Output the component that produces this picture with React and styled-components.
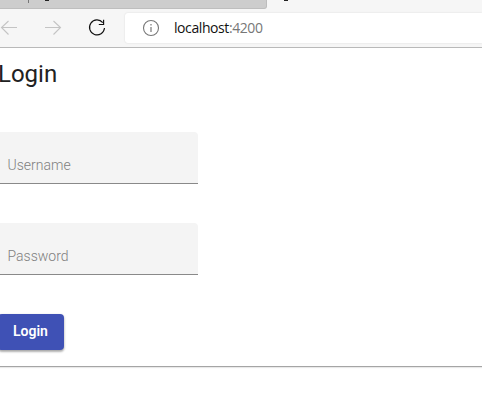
import React from "react";
import styled, { createGlobalStyle } from "styled-components";

const GlobalStyle = createGlobalStyle`
  * { box-sizing: border-box; }
  body { margin: 0; background: #fff; overflow: hidden; font-family: Roboto, sans-serif; }
`;

const Window = styled.main`
  width: 482px;
  height: 419px;
  overflow: hidden;
  background: #fff;
`;

const TabStrip = styled.header`
  display: flex;
  height: 9px;
  background: #f6f6f6;
`;

const InactiveTab = styled.div`
  width: 267px;
  height: 9px;
  background: #cdcdcd;
  border-right: 1px solid #bdbdbd;
  border-bottom: 1px solid #bebebe;
  border-bottom-right-radius: 3px;
`;

const ActiveTab = styled.div`
  flex: 1;
`;

const TabMarks = styled.svg`
  display: block;
`;

const Toolbar = styled.nav`
  display: flex;
  align-items: flex-start;
  height: 39px;
  padding-top: 4px;
  background: #f6f6f6;
  border-bottom: 1px solid #b9b9b9;
`;

const NavButtons = styled.div`
  display: flex;
  width: 125px;
  height: 30px;
`;

const AddressBar = styled.div`
  display: flex;
  flex: 1;
  align-items: center;
  height: 30px;
  padding-left: 17px;
  background: #fff;
  border-radius: 3px 0 0 3px;
  box-shadow: 0 0 2px rgba(0, 0, 0, 0.13);
`;

const Address = styled.span`
  margin-left: 14px;
  font: 14px/20px "Open Sans", sans-serif;
  letter-spacing: -0.42px;
  color: #111;
  white-space: nowrap;
`;

const Port = styled.span`
  color: #777;
`;

const LoginCard = styled.form`
  display: flex;
  flex-direction: column;
  align-items: flex-start;
  height: 319px;
  border-bottom: 1px solid #a5a5a5;
  box-shadow: 0 1px 1px #e9e9e9;
`;

const Title = styled.h1`
  height: 32px;
  margin: 10px 0 42px -2px;
  font-size: 24px;
  font-weight: 450;
  line-height: 32px;
  letter-spacing: 0;
  color: #212121;
`;

const Field = styled.label`
  width: 198px;
  height: 52px;
  margin-bottom: 39px;
  padding: 23px 8px 0 7.5px;
  background: #f4f4f4;
  border-bottom: 1px solid #898989;
  border-top-right-radius: 4px;
  font-size: 14px;
  font-weight: 300;
  line-height: 20px;
  color: #808080;
`;

const SubmitButton = styled.button`
  width: 66px;
  height: 36px;
  margin: 0 0 0 -2px;
  padding: 0 0 2px 15px;
  border: 0;
  border-radius: 4px;
  background: #3f51b5;
  box-shadow: 0 2px 2px rgba(0, 0, 0, 0.22), 0 1px 3px rgba(0, 0, 0, 0.2);
  color: #fff;
  font: 600 14px/34px Roboto, sans-serif;
  text-align: left;
`;

export default function App() {
  return (
    <>
      <GlobalStyle />
      <Window>
        <TabStrip>
          <InactiveTab>
            <TabMarks width="70" height="8">
              <path d="M28.5 0v3" stroke="#777" />
              <path d="M45 0h4" stroke="#222" strokeWidth="2" />
            </TabMarks>
          </InactiveTab>
          <ActiveTab>
            <TabMarks width="40" height="8">
              <path d="M17 0h4" stroke="#222" strokeWidth="2" />
            </TabMarks>
          </ActiveTab>
        </TabStrip>
        <Toolbar>
          <NavButtons>
            <svg width="125" height="30" fill="none">
              <g stroke="#c4c4c4" strokeWidth="1.1">
                <path d="M17 14.5H2M8.5 8L1.5 14.5L8.5 21.5" />
                <path d="M45 14.5h15M53.5 8l7 6.5-7 7" />
              </g>
              <path d="M102.8 9.6A7.5 7.5 0 1 0 104.5 15M103.6 6.8v4.7h-4.8" stroke="#111" strokeWidth="1.15" />
            </svg>
          </NavButtons>
          <AddressBar>
            <svg width="18" height="18" fill="none" stroke="#777">
              <circle cx="9" cy="9" r="7.5" strokeWidth="1.1" />
              <path d="M9 8v5M9 5v1.4" strokeWidth="1.2" />
            </svg>
            <Address>
              localhost<Port>:4200</Port>
            </Address>
          </AddressBar>
        </Toolbar>
        <LoginCard>
          <Title>Login</Title>
          <Field>Username</Field>
          <Field>Password</Field>
          <SubmitButton type="button">Login</SubmitButton>
        </LoginCard>
      </Window>
    </>
  );
}
